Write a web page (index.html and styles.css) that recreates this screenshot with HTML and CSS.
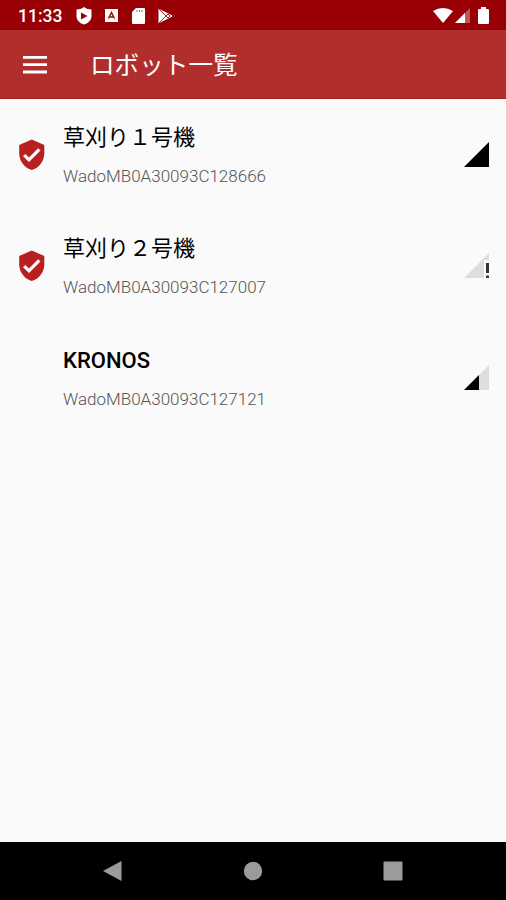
FILE: index.html
```html
<!DOCTYPE html>
<html lang="ja">
<head>
<meta charset="utf-8">
<title>ロボット一覧</title>
<link rel="stylesheet" href="styles.css">
</head>
<body>
<header class="status">
  <span class="clock">11:33</span>
  <svg class="s-shield" viewBox="0 0 16 18"><path fill="#fff" d="M8 0C5.5 1.8 3 2.4.5 2.5V9c0 4.3 3 7.200 7.500 8.500C12.500 16.200 15.500 13.300 15.500 9V2.500C13 2.400 10.500 1.800 8 0z"/><path fill="#980006" d="M5 5.500v7l6.500-3.500z"/></svg>
  <svg class="s-app" viewBox="0 0 13 13"><path fill="#fff" d="M0 0h13v13H0z"/><path d="M3.500 9.500l3-6 3 6M5 8h3" fill="none" stroke="#980006" stroke-width="1.400"/></svg>
  <svg class="s-card" viewBox="0 0 13 16"><path fill="#fff" d="M4 0h8q1 0 1 1v14q0 1-1 1H1q-1 0-1-1V4z"/><path d="M5 2v2M7.500 2v2M10 2v2" stroke="#b85050" stroke-width="1"/></svg>
  <svg class="s-play" viewBox="0 0 15 16"><path fill="#fff" d="M.5.5L15 8 .5 15.500z"/><path d="M1 1l9 9M1 15l9-9M10 6l2 2-2 2" fill="none" stroke="#980006" stroke-width=".9"/></svg>
  <span class="spacer"></span>
  <svg class="s-wifi" viewBox="0 0 20 15"><path fill="#fff" d="M0 3Q10-3 20 3L10 15z"/></svg>
  <svg class="s-cell" viewBox="0 0 15 15"><path fill="#bd5555" d="M15 0v15H0z"/><path fill="#fff" d="M10 5v10H0z"/></svg>
  <svg class="s-battery" viewBox="0 0 11 17"><path fill="#fff" d="M3 0h5v2h2q1 0 1 1v13q0 1-1 1H1q-1 0-1-1V3q0-1 1-1h2z"/></svg>
</header>
<div class="appbar">
  <svg class="menu" viewBox="0 0 24 18"><path fill="#fff" d="M0 0h24v2.800H0zM0 7.300h24v2.800H0zM0 14.600h24v2.800H0z"/></svg>
  <h1>ロボット一覧</h1>
</div>
<main>
  <div class="row">
    <div class="lead"><svg class="shield" viewBox="0 0 24 24"><path fill="#b71f20" d="M12 1L3 5v6c0 5.550 3.840 10.740 9 12 5.160-1.260 9-6.450 9-12V5z"/><path fill="#fff" stroke="#fff" stroke-width=".4" d="M10 17l-4-4 1.410-1.410L10 14.170l6.590-6.590L18 9z"/></svg></div>
    <div class="text"><div class="name">草刈り１号機</div><div class="id">WadoMB0A30093C128666</div></div>
    <svg class="signal" viewBox="0 0 25 25"><path d="M25 0v25H0z"/></svg>
  </div>
  <div class="row">
    <div class="lead"><svg class="shield" viewBox="0 0 24 24"><path fill="#b71f20" d="M12 1L3 5v6c0 5.550 3.840 10.740 9 12 5.160-1.260 9-6.450 9-12V5z"/><path fill="#fff" stroke="#fff" stroke-width=".4" d="M10 17l-4-4 1.410-1.410L10 14.170l6.590-6.590L18 9z"/></svg></div>
    <div class="text"><div class="name">草刈り２号機</div><div class="id">WadoMB0A30093C127007</div></div>
    <svg class="signal" viewBox="0 0 25 25"><path fill="#dedede" d="M25 0v7h-5v18H0z"/><path fill="#333" d="M22 10h3v10h-3zM22 22.500h3V25h-3z"/></svg>
  </div>
  <div class="row">
    <div class="lead"></div>
    <div class="text"><div class="name latin">KRONOS</div><div class="id">WadoMB0A30093C127121</div></div>
    <svg class="signal" viewBox="0 0 25 25"><path fill="#dedede" d="M25 0v25H0z"/><path d="M15 10v15H0z"/></svg>
  </div>
</main>
<nav>
  <svg viewBox="0 0 20 20"><path fill="#9b9b9b" d="M18.500 0v20L0 10z"/></svg>
  <svg viewBox="0 0 20 20"><circle cx="10" cy="10" r="9.200" fill="#9b9b9b"/></svg>
  <svg viewBox="0 0 20 20"><rect x=".5" y=".5" width="19" height="19" rx="1" fill="#9b9b9b"/></svg>
</nav>
</body>
</html>
```
FILE: styles.css
```css
* { box-sizing: border-box; }
body {
  margin: 0;
  height: 900px;
  display: flex;
  flex-direction: column;
  background: #fafafa;
  font-family: Roboto, "Noto Sans CJK JP", sans-serif;
  overflow: hidden;
}
svg { display: block; flex: none; }
.status {
  height: 30px;
  flex: none;
  display: flex;
  align-items: center;
  padding: 1px 16px 0 18px;
  background: #980006;
  color: #fff;
}
.clock { width: 58px; font-size: 17.5px; font-weight: 500; line-height: 30px; }
.s-shield { width: 16px; height: 18px; margin-right: 13px; }
.s-app { width: 13px; height: 13px; margin-right: 14px; }
.s-card { width: 13px; height: 16px; margin-right: 13px; }
.s-play { width: 15px; height: 16px; }
.spacer { flex: 1; }
.s-wifi { width: 20px; height: 15px; margin-right: 2px; }
.s-cell { width: 15px; height: 15px; margin-right: 8px; }
.s-battery { width: 11px; height: 17px; margin-right: 1px; }
.appbar {
  height: 69px;
  flex: none;
  display: flex;
  align-items: center;
  padding-left: 23px;
  background: #b02e2b;
  border-bottom: 1px solid #a21c1c;
  color: #fff;
}
.menu { width: 24px; height: 18px; margin: 1px 43px 0 0; }
h1 { margin: 0; padding-top: 4px; font-size: 24.6px; font-weight: 400; line-height: 36px; }
main { flex: 1; }
.row {
  height: 111.3px;
  display: flex;
  align-items: center;
  padding-right: 17px;
}
.lead { width: 63px; flex: none; }
.shield { width: 33.5px; height: 33.5px; margin-left: 15px; }
.text { flex: 1; }
.name { font-size: 22px; line-height: 32px; color: #000; }
.latin { font-weight: 500; }
.id {
  margin-top: 11px;
  font-size: 17px;
  font-weight: 300;
  line-height: 22px;
  color: #555;
}
.signal { width: 25px; height: 25px; }
nav {
  height: 58px;
  flex: none;
  display: flex;
  align-items: center;
  justify-content: space-between;
  padding: 0 103px;
  background: #000;
}
nav svg { width: 20px; height: 20px; }
```
